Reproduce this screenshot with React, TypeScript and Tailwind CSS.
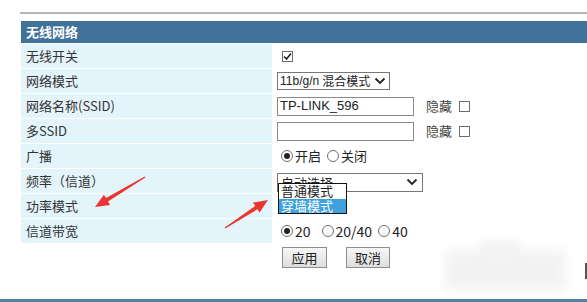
import React from 'react';

const cjk = { fontFamily: '"Noto Sans CJK SC", "Liberation Sans", sans-serif' };
const latin = { fontFamily: '"Liberation Sans", "Noto Sans CJK SC", sans-serif' };

function Check({ on }: { on?: boolean }) {
  return (
    <span className="inline-flex w-[11px] h-[11px] border border-[#6b6b6b] bg-white items-center justify-center">
      {on && (
        <svg width="9" height="9" viewBox="0 0 9 9">
          <path d="M1 4.5 L3.5 7 L8 1.5" fill="none" stroke="#222" strokeWidth="1.6" />
        </svg>
      )}
    </span>
  );
}

function Radio({ on }: { on?: boolean }) {
  return (
    <span className="inline-flex w-[12px] h-[12px] rounded-full border border-[#6f6f6f] bg-white items-center justify-center">
      {on && <span className="w-[6px] h-[6px] rounded-full bg-[#222]" />}
    </span>
  );
}

function Chevron() {
  return (
    <svg width="12" height="8" viewBox="0 0 12 8">
      <path d="M1.5 1.5 L6 6 L10.5 1.5" fill="none" stroke="#222" strokeWidth="1.8" />
    </svg>
  );
}

function Row({ label, children }: { label: string; children?: React.ReactNode }) {
  return (
    <div className="flex h-[24px]">
      <div className="w-[251px] bg-[#e4f4fb] pl-[5px] flex items-center text-[13px] text-[#333]" style={cjk}>
        {label}
      </div>
      <div className="flex-1 relative flex items-center pl-[5px] text-[13px] text-[#222]">{children}</div>
    </div>
  );
}

export default function App() {
  return (
    <div className="relative w-[587px] h-[302px] bg-white overflow-hidden">
      <div className="h-[12px]" />
      <div className="ml-[20px] h-[2px] bg-[#b5b5b5]" />
      <div className="ml-[21px] mt-[7px] flex flex-col gap-[1px]">
        <div className="h-[22px] bg-[#41729a] flex items-center pl-[5px] text-white text-[13px] font-bold" style={cjk}>
          无线网络
        </div>

        <Row label="无线开关">
          <span className="ml-[5px] flex"><Check on /></span>
        </Row>

        <Row label="网络模式">
          <div className="h-[18px] w-[113px] border border-[#767676] bg-white flex items-center justify-between pl-[2px] pr-[3px] text-[12px] whitespace-nowrap" style={latin}>
            <span className="flex items-center gap-[3px]">
              <span>11b/g/n</span>
              <span style={cjk}>混合模式</span>
            </span>
            <Chevron />
          </div>
        </Row>

        <Row label="网络名称(SSID)">
          <div className="h-[19px] w-[137px] border border-[#8a8a8a] bg-white flex items-center pl-[2px] text-[13px]" style={latin}>
            TP-LINK_596
          </div>
          <span className="ml-[12px] text-[#444]" style={cjk}>隐藏</span>
          <span className="ml-[7px] flex"><Check /></span>
        </Row>

        <Row label="多SSID">
          <div className="h-[19px] w-[137px] border border-[#8a8a8a] bg-white" />
          <span className="ml-[12px] text-[#444]" style={cjk}>隐藏</span>
          <span className="ml-[7px] flex"><Check /></span>
        </Row>

        <Row label="广播">
          <span className="ml-[4px] flex items-center gap-[2px]" style={cjk}>
            <Radio on />
            <span>开启</span>
          </span>
          <span className="ml-[6px] flex items-center gap-[2px]" style={cjk}>
            <Radio />
            <span>关闭</span>
          </span>
        </Row>

        <Row label="频率（信道）">
          <div className="h-[19px] w-[146px] mt-[2px] border border-[#767676] bg-white flex items-start justify-between pl-[3px] pr-[4px] text-[13px] leading-[17px]" style={cjk}>
            <span>自动选择</span>
            <span className="mt-[4px] flex"><Chevron /></span>
          </div>
          <div className="absolute left-[6px] top-[14px] w-[69px] border border-[#111] bg-white text-[13px] leading-[14px] z-10" style={cjk}>
            <div className="h-[15px] pl-[2px]">普通模式</div>
            <div className="h-[14px] pl-[2px] bg-[#3fa2dc] text-white">穿墙模式</div>
          </div>
        </Row>

        <Row label="功率模式" />

        <Row label="信道带宽">
          <span className="ml-[4px] flex items-center gap-[2px]" style={cjk}>
            <Radio on />
            <span className="text-[14px]">20</span>
          </span>
          <span className="ml-[11px] flex items-center gap-[2px]" style={cjk}>
            <Radio />
            <span className="text-[14px]">20/40</span>
          </span>
          <span className="ml-[6px] flex items-center gap-[2px]" style={cjk}>
            <Radio />
            <span className="text-[14px]">40</span>
          </span>
        </Row>

        <div className="flex gap-[19px] pl-[261px] pt-[3px]">
          <div className="w-[45px] h-[21px] border border-[#8d8d8d] bg-gradient-to-b from-[#f6f6f6] to-[#dedede] flex items-center justify-center text-[13px] text-[#222]" style={cjk}>
            应用
          </div>
          <div className="w-[44px] h-[21px] border border-[#8d8d8d] bg-gradient-to-b from-[#f6f6f6] to-[#dedede] flex items-center justify-center text-[13px] text-[#222]" style={cjk}>
            取消
          </div>
        </div>
      </div>

      {/* blurred watermark patch */}
      <div className="absolute left-[445px] top-[250px] w-[120px] h-[40px] bg-[#efefef] blur-[6px] opacity-80" />
      <div className="absolute left-[480px] top-[240px] w-[40px] h-[20px] bg-[#f3f3f3] blur-[4px]" />
      <div className="absolute left-[585px] top-[263px] w-[2px] h-[16px] bg-[#555]" />

      {/* bottom rule */}
      <div className="absolute left-0 bottom-0 w-full h-[3px] bg-[#56809f]" />

      {/* red arrows */}
      <svg className="absolute left-0 top-0 pointer-events-none" width="587" height="302" viewBox="0 0 587 302">
        <path d="M144.7 176.6 L106 198.1 L103.9 194.7 L95 207 L110.1 204.9 L108 201.5 L145.3 177.4 Z" fill="#ea3630" />
        <path d="M224.7 227.6 L255.2 205.9 L253 202.6 L268 200 L259.6 212.6 L257.4 209.3 L225.3 228.4 Z" fill="#ea3630" />
      </svg>
    </div>
  );
}
